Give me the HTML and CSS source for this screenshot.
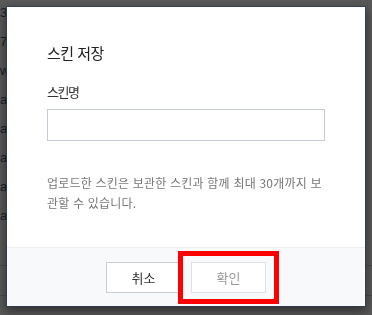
FILE: index.html
```html
<!DOCTYPE html>
<html lang="ko">
<head>
    <meta charset="UTF-8">
    <meta name="viewport" content="width=device-width, initial-scale=1.0">
    <title>스킨 저장</title>
    <link rel="stylesheet" href="styles.css">
</head>
<body>
    <div class="page">
        <div class="row">3</div>
        <div class="row">7</div>
        <div class="row">w</div>
        <div class="row">a</div>
        <div class="row">a</div>
        <div class="row">a</div>
        <div class="row">a</div>
        <div class="row">a</div>
        <div class="row line"></div>
        <div class="row line"></div>
    </div>

    <div class="dim"></div>

    <div class="modal">
        <div class="modal-body">
            <h2 class="modal-title">스킨 저장</h2>
            <label class="field-label" for="skinName">스킨명</label>
            <input type="text" id="skinName" class="field-input">
            <p class="desc">업로드한 스킨은 보관한 스킨과 함께 최대 30개까지 보관할 수 있습니다.</p>
        </div>
        <div class="modal-footer">
            <button class="btn">취소</button>
            <button class="btn btn-disabled">확인</button>
        </div>
        <div class="highlight"></div>
    </div>
</body>
</html>
```

FILE: styles.css
```css
body {
    margin: 0;
    width: 372px;
    height: 315px;
    overflow: hidden;
    background-color: #fff;
    font-family: "Noto Sans CJK KR", "Noto Sans", sans-serif;
}
.page {
    padding-top: 4px;
}
.row {
    height: 29px;
    line-height: 18px;
    font-family: "Liberation Sans", Arial, sans-serif;
    font-size: 13px;
    color: #1f3a63;
}
.row.line {
    height: 29px;
    border-bottom: 1px solid #c9cdd3;
}
.dim {
    position: fixed;
    inset: 0;
    background-color: rgba(20, 20, 20, 0.7);
}
.modal {
    position: fixed;
    left: 7px;
    top: 7px;
    width: 358px;
    height: 299px;
    background-color: #fff;
    box-shadow: 0 0 0 1px rgba(40, 60, 85, 0.6), 0 4px 10px 2px rgba(0, 0, 0, 0.45);
    display: flex;
    flex-direction: column;
}
.modal-body {
    padding: 35px 40px 0 40px;
    flex: 1;
}
.modal-title {
    margin: 0;
    font-size: 15px;
    line-height: 22px;
    font-weight: normal;
    color: #222;
    letter-spacing: -0.5px;
}
.field-label {
    display: block;
    margin-top: 18px;
    font-size: 13px;
    line-height: 20px;
    color: #333;
    letter-spacing: -1.5px;
}
.field-input {
    display: block;
    margin-top: 7px;
    width: 278px;
    height: 32px;
    box-sizing: border-box;
    border: 1px solid #c5ccd6;
    border-radius: 0;
    outline: none;
}
.desc {
    margin: 32px 0 0 0;
    font-size: 12px;
    line-height: 20px;
    color: #777;
    letter-spacing: 0.2px;
}
.modal-footer {
    border-top: 1px solid #eceef2;
    background-color: #f8f9fb;
    padding: 14px 0 13px 0;
    display: flex;
    justify-content: center;
    gap: 10px;
}
.btn {
    width: 75px;
    height: 31px;
    background-color: #fff;
    border: 1px solid #c8ced6;
    font-family: "Noto Sans CJK KR", sans-serif;
    font-size: 13px;
    color: #333;
    padding: 0;
    cursor: pointer;
}
.btn-disabled {
    border-color: #dde1e8;
    color: #999;
}
.highlight {
    position: absolute;
    left: 171px;
    top: 244px;
    width: 91px;
    height: 43px;
    border: 5px solid #ff0000;
}
```
